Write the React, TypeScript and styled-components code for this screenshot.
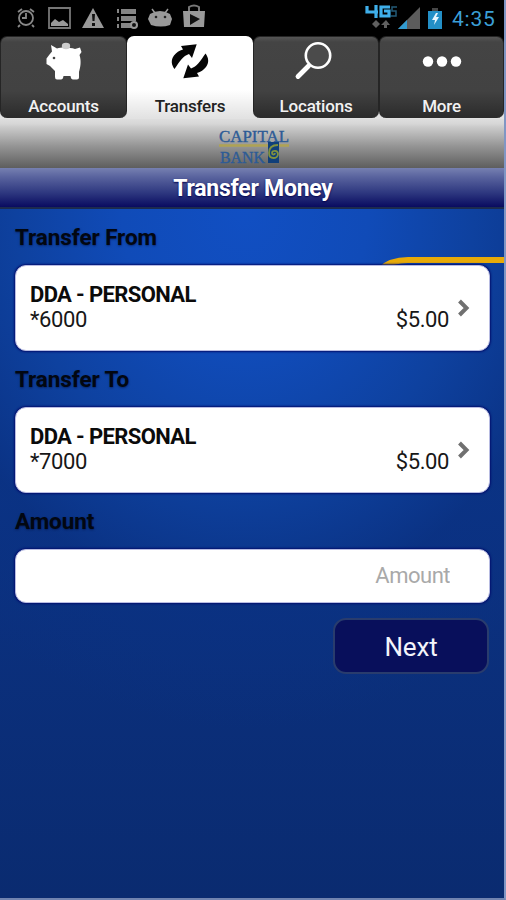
import React from "react";
import styled, { createGlobalStyle } from "styled-components";

const GlobalStyle = createGlobalStyle`
  *, *::before, *::after { box-sizing: border-box; }
  html, body { margin: 0; padding: 0; background: #000; }
  body { font-family: Roboto, "Liberation Sans", sans-serif; overflow: hidden; }
`;

const Screen = styled.div`
  width: 506px;
  height: 900px;
  display: flex;
  flex-direction: column;
  border-right: 2px solid #8096c4;
  border-bottom: 2px solid #7184b0;
  background: #0a2c72;
`;

const StatusBar = styled.header`
  height: 36px;
  flex: none;
  display: flex;
  justify-content: space-between;
  background: #000;
`;

const StatusIcons = styled.svg`
  display: block;
  height: 36px;
`;

const StatusRight = styled.div`
  display: flex;
`;

const Clock = styled.time`
  width: 52px;
  padding-top: 1px;
  font-size: 21px;
  line-height: 36px;
  letter-spacing: 0.8px;
  color: #3b9fd6;
`;

const TabBar = styled.nav`
  height: 83px;
  flex: none;
  display: grid;
  grid-template-columns: 127px 126px 126px 125px;
  background: linear-gradient(#000 0, #000 68px, #e2e2e2 74px, #e2e2e2 100%);
`;

const Tab = styled.button<{ $active?: boolean }>`
  display: flex;
  flex-direction: column;
  align-items: center;
  justify-content: space-between;
  height: ${(p) => (p.$active ? 83 : 82)}px;
  padding: ${(p) => (p.$active ? "5px 0 3px" : "4px 0 2px")};
  border: solid ${(p) => (p.$active ? "#fff" : "#252525")};
  border-width: ${(p) => (p.$active ? "0" : "1px 1px 0")};
  border-radius: ${(p) => (p.$active ? "7px 7px 0 0" : "7px")};
  background: ${(p) =>
    p.$active
      ? "linear-gradient(#fff 0, #fff 54px, #e2e2e2 82px)"
      : "linear-gradient(#555 0, #444 5px, #424242 54px, #2b2b2b 100%)"};
  color: ${(p) => (p.$active ? "#222" : "#f2f2f2")};
  font-family: inherit;
  cursor: pointer;
`;

const TabIcon = styled.svg`
  display: block;
  width: 46px;
  height: 42px;
`;

const TabLabel = styled.span`
  font-size: 17px;
  font-weight: 500;
  line-height: 20px;
  letter-spacing: -0.2px;
`;

const BrandBar = styled.div`
  height: 49px;
  flex: none;
  display: flex;
  justify-content: center;
  background: linear-gradient(#dedede 0, #d6d6d6 5px, #cbcbcb 8px, #929292 28px, #5e5e5e 100%);
`;

const Logo = styled.svg`
  display: block;
  width: 76px;
  height: 49px;
  margin-left: 4px;
`;

const TitleBar = styled.h1`
  height: 41px;
  flex: none;
  margin: 0;
  padding-left: 2px;
  border-bottom: 2px solid #1c2b4e;
  background: linear-gradient(#7680b1 0, #59639e 9px, #2d377f 25px, #090b60 100%);
  color: #fff;
  text-align: center;
  text-shadow: 0 1px 2px #00004c;
  font-size: 23px;
  font-weight: 700;
  line-height: 42px;
  letter-spacing: -0.25px;
`;

const Content = styled.main`
  position: relative;
  flex: 1;
  display: flex;
  flex-direction: column;
  padding: 12px 14px 0 14px;
  background:
    radial-gradient(ellipse 440px 520px at 245px 0, #114fc3 0, #104bb8 28%, #0e419f 52%, rgba(10, 50, 132, 0.65) 76%, rgba(10, 46, 120, 0) 100%),
    linear-gradient(#0b388f 0, #0b3180 52%, #0a2b70 100%);
`;

const GoldLine = styled.svg`
  position: absolute;
  top: 45px;
  right: 0;
  width: 126px;
  height: 16px;
`;

const FieldLabel = styled.h2`
  height: 30px;
  margin: 0;
  padding: 1px 0 0 1px;
  color: #020711;
  text-shadow: 0 1px 2px rgba(0, 12, 55, 0.5);
  font-size: 22.5px;
  font-weight: 700;
  line-height: 30px;
  letter-spacing: -0.1px;
`;

const AccountCard = styled.button`
  position: relative;
  height: 86px;
  flex: none;
  display: flex;
  align-items: center;
  margin: 14px 0 12px 1px;
  padding: 0 17px 2px 14px;
  border: 1px solid #b8bce2;
  border-radius: 11px;
  background: #fff;
  box-shadow: 0 0 2px 1px #03116f;
  color: #0b0b0b;
  font-family: inherit;
  text-align: left;
`;

const AccountInfo = styled.span`
  flex: 1;
  display: flex;
  flex-direction: column;
`;

const AccountName = styled.strong`
  font-size: 22px;
  font-weight: 700;
  line-height: 25px;
  letter-spacing: -0.63px;
`;

const AccountLine = styled.span`
  display: flex;
  justify-content: space-between;
  font-size: 22px;
  line-height: 25px;
  letter-spacing: -0.4px;
  color: #171717;
`;

const Chevron = styled.svg`
  width: 16px;
  height: 22px;
  margin-left: 7px;
`;

const AmountInput = styled.input`
  height: 54px;
  flex: none;
  margin: 14px 0 15px 1px;
  padding: 0 39px 2px 15px;
  border: 1px solid #b8bce2;
  border-radius: 11px;
  outline: none;
  background: #fff;
  box-shadow: 0 0 2px 1px #03116f;
  font: 400 22px Roboto, "Liberation Sans", sans-serif;
  letter-spacing: -0.5px;
  text-align: right;
  &::placeholder { color: #a9a9a9; opacity: 1; }
`;

const NextButton = styled.button`
  align-self: flex-end;
  width: 156px;
  height: 56px;
  margin-right: 1px;
  padding-top: 3px;
  border: 2px solid #293c6d;
  border-radius: 13px;
  background: #080f5b;
  color: #f3f4fa;
  font: 400 26px Roboto, "Liberation Sans", sans-serif;
  letter-spacing: -0.2px;
`;

const arrowPath = "M14 5L29.7 3.300 25 17l-3-4c-6 2-9 7-14.500 15-3-4-4-9-.5-13.500 2.500-3 5-5 9-6z";

const tabs = [
  {
    label: "Accounts",
    icon: (
      <>
        <path
          fill="#fff"
          d="M10 4l6 3.500c5-1.500 13-1 18 .5l5-1.500 1.500 4.500-2 3c2 6 1 12-.5 17v5.500q0 2-2 2h-4q-2 0-2.500-3.500h-7q-.5 3.500-2.500 3.500h-4q-2 0-2-2.500v-6l-5-5-3.500-2v-5.500l3-4 2.500-3z"
        />
        <ellipse cx="25" cy="5" rx="4.200" ry="3.200" fill="#ccc" />
        <circle cx="13" cy="17" r="1.300" fill="#444" />
      </>
    ),
  },
  {
    label: "Transfers",
    active: true,
    icon: (
      <g fill="#050505">
        <path d={arrowPath} />
        <path d={arrowPath} transform="rotate(180 23 20.300)" />
      </g>
    ),
  },
  {
    label: "Locations",
    icon: (
      <g fill="none" stroke="#fff">
        <circle cx="25" cy="14.500" r="12.200" strokeWidth="2.600" fill="#4b4b4b" />
        <path d="M15.500 25L5 35.500" strokeWidth="4.800" strokeLinecap="round" />
      </g>
    ),
  },
  {
    label: "More",
    icon: (
      <g fill="#fff">
        <circle cx="9" cy="20.500" r="5.200" />
        <circle cx="23" cy="20.500" r="5.200" />
        <circle cx="37" cy="20.500" r="5.200" />
      </g>
    ),
  },
];

const accounts = [
  { label: "Transfer From", name: "DDA - PERSONAL", number: "*6000", balance: "$5.00" },
  { label: "Transfer To", name: "DDA - PERSONAL", number: "*7000", balance: "$5.00" },
];

function Notifications() {
  return (
    <StatusIcons width="215" viewBox="0 0 215 36" fill="#999">
      <g fill="none" stroke="#888" strokeWidth="1.800">
        <circle cx="26" cy="18" r="7" />
        <path d="M26 13v5h-4M18 12l4-3M34 12l-4-3M20 25l-2 2M32 25l2 2" />
        <path d="M49 8h21v20H49z" stroke="#777" />
      </g>
      <path d="M51 26v-3l4-4 4 3 4-2 5 4v2z" />
      <path d="M93 8l11 20H82z" />
      <path d="M92 14h3l-.5 7h-2zM92 23h3v3h-3z" fill="#111" />
      <path d="M121 9h15v5h-15zM121 16h15v5h-15zM121 23h10v5h-10zM117 9h2v4h-2zM117 17h2v4h-2zM117 24h2v4h-2z" fill="#858585" />
      <circle cx="134" cy="25" r="3" fill="#111" stroke="#999" strokeWidth="2" />
      <path d="M150 14q10-6 20 0l2 5-2 6q-9 3-19 0l-3-6z" />
      <path d="M155 13l-3-4M165 13l3-4" stroke="#999" strokeWidth="1.500" />
      <circle cx="156" cy="17" r="1.300" fill="#222" />
      <circle cx="165" cy="17" r="1.300" fill="#222" />
      <path d="M183 11h22l-1 16h-20z" />
      <path d="M189 11V7q5-3 10 0v4" fill="none" stroke="#777" strokeWidth="2" />
      <path d="M190 14l10 5-10 6z" fill="#111" />
    </StatusIcons>
  );
}

function Signals() {
  return (
    <StatusIcons width="90" viewBox="362 0 90 36">
      <g fill="none" stroke="#3fafea" strokeWidth="3.200">
        <path d="M367 6v6h11M376 5v13M390 7h-9v9h8v-5h-5" />
      </g>
      <path d="M397 7h-5v4h4v5h-5" fill="none" stroke="#235b78" strokeWidth="1.500" />
      <path d="M376 20l4 4-4 4-4-4zM386 20l4 5h-3v3h-3v-3h-3z" fill="#606060" />
      <path d="M420 7v22h-22z" fill="#5c5c5c" />
      <path d="M407 20v9h-9z" fill="#319bd0" />
      <path d="M432 8h6v3h4v18h-14V11h4z" fill="#238fc7" />
      <path d="M432 8h6v3h-6z" fill="#474747" />
      <path d="M436 13l-4 7h3l-1 5 5-8h-3l2-4z" fill="#e7f6ff" />
    </StatusIcons>
  );
}

function BankLogo() {
  return (
    <Logo viewBox="0 0 76 49" aria-label="Capital Bank">
      <g fill="#2d5b96" fontFamily="Liberation Serif, serif" fontWeight="400" stroke="#2d5b96" strokeWidth="0.400" fontSize="17">
        <text x="3" y="22.500" textLength="70" lengthAdjust="spacingAndGlyphs">CAPITAL</text>
        <text x="4" y="44" textLength="45" lengthAdjust="spacingAndGlyphs">BANK</text>
      </g>
      <path d="M3 26.500h70" stroke="#afa354" strokeWidth="2.400" />
      <path d="M52 23h11v21H52z" fill="#103f7a" />
      <path d="M62 26c-7 0-9 3-9 8 0 7 9 6 9 1 0-4-6-4-6-1 0 2 3 2 3 0" fill="none" stroke="#81913f" strokeWidth="1.800" />
    </Logo>
  );
}

export default function App() {
  return (
    <>
      <GlobalStyle />
      <Screen>
        <StatusBar>
          <Notifications />
          <StatusRight>
            <Signals />
            <Clock>4:35</Clock>
          </StatusRight>
        </StatusBar>
        <TabBar>
          {tabs.map((tab) => (
            <Tab key={tab.label} $active={tab.active}>
              <TabIcon viewBox="0 0 46 42">{tab.icon}</TabIcon>
              <TabLabel>{tab.label}</TabLabel>
            </Tab>
          ))}
        </TabBar>
        <BrandBar><BankLogo /></BrandBar>
        <TitleBar>Transfer Money</TitleBar>
        <Content>
          <GoldLine viewBox="0 0 126 16">
            <path d="M2 16Q12 6 30 6h96" fill="none" stroke="#e7aa08" strokeWidth="6" />
          </GoldLine>
          {accounts.map((account) => (
            <React.Fragment key={account.label}>
              <FieldLabel>{account.label}</FieldLabel>
              <AccountCard>
                <AccountInfo>
                  <AccountName>{account.name}</AccountName>
                  <AccountLine><span>{account.number}</span><span>{account.balance}</span></AccountLine>
                </AccountInfo>
                <Chevron viewBox="0 0 16 22">
                  <path d="M3.500 5l7 7-7 7" fill="none" stroke="#707070" strokeWidth="4" />
                </Chevron>
              </AccountCard>
            </React.Fragment>
          ))}
          <FieldLabel>Amount</FieldLabel>
          <AmountInput placeholder="Amount" aria-label="Amount" />
          <NextButton>Next</NextButton>
        </Content>
      </Screen>
    </>
  );
}
